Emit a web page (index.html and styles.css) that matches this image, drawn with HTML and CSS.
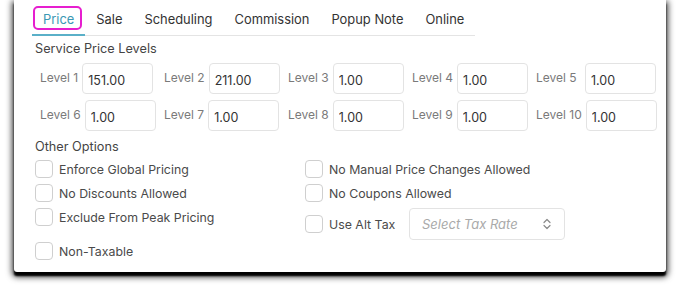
FILE: index.html
```html
<!DOCTYPE html>
<html lang="en">
  <head>
    <meta charset="UTF-8" />
    <meta name="viewport" content="width=device-width, initial-scale=1.0" />
    <title>Service Price</title>
    <link rel="stylesheet" href="styles.css">
  </head>
  <body>
    <div class="card">
      <!-- tabs -->
      <ul class="tabs">
        <li class="tab active">Price</li>
        <li class="tab">Sale</li>
        <li class="tab">Scheduling</li>
        <li class="tab">Commission</li>
        <li class="tab">Popup Note</li>
        <li class="tab">Online</li>
      </ul>

      <!-- price levels -->
      <div class="section-title">Service Price Levels</div>
      <div class="levels">
        <label class="level"><span class="level-name">Level 1</span><input class="level-input" value="151.00"></label>
        <label class="level"><span class="level-name">Level 2</span><input class="level-input" value="211.00"></label>
        <label class="level"><span class="level-name">Level 3</span><input class="level-input" value="1.00"></label>
        <label class="level"><span class="level-name">Level 4</span><input class="level-input" value="1.00"></label>
        <label class="level"><span class="level-name wide">Level 5</span><input class="level-input" value="1.00"></label>
        <label class="level"><span class="level-name">Level 6</span><input class="level-input" value="1.00"></label>
        <label class="level"><span class="level-name">Level 7</span><input class="level-input" value="1.00"></label>
        <label class="level"><span class="level-name">Level 8</span><input class="level-input" value="1.00"></label>
        <label class="level"><span class="level-name">Level 9</span><input class="level-input" value="1.00"></label>
        <label class="level"><span class="level-name wide">Level 10</span><input class="level-input" value="1.00"></label>
      </div>

      <!-- other options -->
      <div class="section-title other">Other Options</div>
      <div class="options">
        <label class="option"><span class="check"></span>Enforce Global Pricing</label>
        <label class="option"><span class="check"></span>No Manual Price Changes Allowed</label>
        <label class="option"><span class="check"></span>No Discounts Allowed</label>
        <label class="option"><span class="check"></span>No Coupons Allowed</label>
        <label class="option"><span class="check"></span>Exclude From Peak Pricing</label>
        <div class="option alt-tax">
          <span class="check"></span><span class="alt-label">Use Alt Tax</span>
          <div class="select">
            <span class="placeholder">Select Tax Rate</span>
            <svg width="10" height="14" viewBox="0 0 10 14">
              <path d="M2 5.5 L5 2.5 L8 5.5 M2 8.5 L5 11.5 L8 8.5" fill="none" stroke="#8a8a8a" stroke-width="1.2" stroke-linecap="round" stroke-linejoin="round" />
            </svg>
          </div>
        </div>
        <label class="option"><span class="check"></span>Non-Taxable</label>
      </div>
    </div>
  </body>
</html>
```

FILE: styles.css
```css
* {
  margin: 0;
  padding: 0;
  box-sizing: border-box;
}
ul {
  list-style: none;
}
body {
  padding-bottom: 20px;
  background-color: #fff;
  font-family: Inter, "Noto Sans", sans-serif;
  font-size: 13px;
  color: #444;
}

/* card */
.card {
  width: 652px;
  height: 272px;
  margin-left: 14px;
  padding: 0 12px 12px 21px;
  background-color: #fff;
  border-radius: 0 0 3px 3px;
  /* 截图里的深色投影, 底部最重 */
  box-shadow: 0 4px 2px 0 #000, 0 3px 6px 2px rgba(0, 0, 0, 0.75);
}

/* tabs */
.tabs {
  display: inline-flex;
  margin-left: -3px;
  border-bottom: 1px solid #e4e4e4;
}
.tab {
  position: relative;
  padding: 11px 11px 5px;
  line-height: 18px;
  margin-bottom: -1px;
  border-bottom: 2px solid transparent;
  font-size: 12.9px;
  color: #333;
}
.tab.active {
  color: #3a98b4;
  border-bottom-color: #5ab0c8;
}
/* highlight frame */
.tab.active::after {
  content: '';
  position: absolute;
  top: 6px;
  left: 1px;
  right: 3px;
  bottom: 4px;
  border: 2px solid #e61ecf;
  border-radius: 5px;
}

.section-title {
  margin: 5px 0 6px;
  line-height: 16px;
  font-size: 12.7px;
  color: #444;
}
.section-title.other {
  margin: 8px 0 5px;
}

/* levels */
.levels {
  display: grid;
  grid-template-columns: repeat(5, 124px);
  row-gap: 6px;
  padding-left: 5px;
}
.level {
  display: flex;
  align-items: center;
  height: 31px;
}
.level-name {
  margin-right: 4px;
  margin-top: -3px;
  font-size: 12px;
  color: #7a7a7a;
}
.level-name.wide {
  min-width: 45px;
}
.level-input {
  width: 71px;
  height: 31px;
  padding: 3px 0 0 5px;
  border: 1px solid #e3e3e3;
  border-radius: 4px;
  font-family: inherit;
  font-size: 12.5px;
  color: #333;
  outline: none;
}

/* options */
.options {
  display: grid;
  grid-template-columns: 270px 1fr;
  grid-template-rows: 18px 18px 28px 18px;
  row-gap: 6px;
  font-size: 12.35px;
}
.option {
  display: flex;
  align-items: center;
  height: 18px;
  color: #4a4a4a;
  white-space: nowrap;
}
.check {
  width: 18px;
  height: 18px;
  margin-right: 6px;
  border: 1px solid #cfcfcf;
  border-radius: 4px;
  background-color: #fff;
}
.option.alt-tax {
  height: 32px;
}
.alt-label {
  width: 80px;
}
.select {
  display: flex;
  align-items: center;
  justify-content: space-between;
  width: 156px;
  height: 32px;
  padding: 0 12px;
  border: 1px solid #e3e3e3;
  border-radius: 4px;
}
.placeholder {
  font-style: italic;
  font-size: 13px;
  color: #aaa;
}
```
